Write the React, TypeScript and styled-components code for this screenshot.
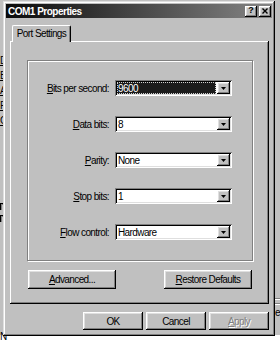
import React from "react";
import styled, { createGlobalStyle } from "styled-components";

const GlobalStyle = createGlobalStyle`
  html, body { margin: 0; padding: 0; background: #c0c0c0; }
  body { font-family: "Liberation Sans", Arial, sans-serif; }
`;

const raised = `
  box-shadow: inset -1px -1px #000, inset 1px 1px #fff, inset -2px -2px #808080, inset 2px 2px #dfdfdf;
`;

const Desktop = styled.div`
  position: relative;
  width: 280px;
  height: 342px;
  overflow: hidden;
  background: #c0c0c0;
  font-family: "Liberation Sans", Arial, sans-serif;
  font-size: 10px;
  letter-spacing: -0.6px;
  color: #000;
`;

const BackLabels = styled.div`
  position: absolute;
  left: 0;
  top: 56px;
  display: flex;
  flex-direction: column;
  gap: 5px;
  line-height: 10px;
`;

const BackLabel = styled.span<{ $gap?: number }>`
  display: block;
  margin-top: ${(p) => p.$gap ?? 0}px;
  text-decoration: underline;
  text-underline-offset: 1px;
`;

const BackBox = styled.span`
  display: block;
  width: 9px;
  height: 6px;
  border-left: 1px solid #000;
  border-top: 1px solid #000;
  box-shadow: inset 1px 1px #808080;
`;

const BottomStrip = styled.div`
  position: absolute;
  left: 0;
  right: 0;
  bottom: 0;
  height: 7px;
  background: #fff;
  display: flex;
  align-items: flex-end;
  gap: 8px;
  padding-left: 0;
  line-height: 10px;
`;

const RightStrip = styled.div`
  position: absolute;
  right: 0;
  top: 298px;
  width: 5px;
  display: flex;
  flex-direction: column;
  gap: 4px;
  line-height: 10px;
`;

const RightLine = styled.span`
  display: block;
  height: 1px;
  background: #808080;
  box-shadow: 0 1px #fff;
`;

const Dialog = styled.div`
  position: absolute;
  left: 3px;
  top: 1px;
  width: 272px;
  height: 335px;
  box-sizing: border-box;
  padding: 3px;
  background: #c0c0c0;
  box-shadow: inset -1px -1px #000, inset 1px 1px #dfdfdf, inset -2px -2px #808080, inset 2px 2px #fff;
  display: flex;
  flex-direction: column;
`;

const TitleBar = styled.div`
  height: 14px;
  flex: none;
  display: flex;
  align-items: center;
  justify-content: space-between;
  padding: 0 1px 0 2px;
  background: linear-gradient(to right, #0a0a0a, #858585);
`;

const Title = styled.span`
  color: #fff;
  font-weight: bold;
  font-size: 10px;
  letter-spacing: -0.5px;
`;

const TitleButtons = styled.div`
  display: flex;
  gap: 2px;
`;

const TitleButton = styled.div`
  width: 12px;
  height: 11px;
  box-sizing: border-box;
  background: #c0c0c0;
  ${raised}
  display: flex;
  align-items: center;
  justify-content: center;
  font-weight: bold;
  font-size: 9px;
  letter-spacing: 0;
  line-height: 9px;
  padding-bottom: 1px;
`;

const TabStrip = styled.div`
  margin-top: 7px;
  height: 16px;
  display: flex;
  padding-left: 6px;
  position: relative;
  z-index: 1;
`;

const Tab = styled.div`
  width: 59px;
  height: 17px;
  box-sizing: border-box;
  background: #c0c0c0;
  border-top: 1px solid #fff;
  border-left: 1px solid #fff;
  border-right: 1px solid #000;
  border-radius: 2px 2px 0 0;
  box-shadow: inset -1px 0 #808080;
  display: flex;
  align-items: center;
  justify-content: center;
  padding-bottom: 1px;
`;

const Panel = styled.div`
  margin: 0 3px 0 4px;
  height: 263px;
  box-sizing: border-box;
  padding: 19px 16px 0 17px;
  background: #c0c0c0;
  box-shadow: inset -1px -1px #000, inset 1px 1px #fff, inset -2px -2px #808080;
  display: flex;
  flex-direction: column;
`;

const GroupBox = styled.div`
  height: 201px;
  box-sizing: border-box;
  border: 1px solid #808080;
  box-shadow: inset 1px 1px #fff, 1px 1px #fff;
  display: grid;
  grid-template-columns: 81px 117px;
  grid-auto-rows: 16px;
  column-gap: 6px;
  row-gap: 20px;
  align-content: start;
  padding-top: 19px;
`;

const FieldLabel = styled.label`
  justify-self: end;
  align-self: center;
  white-space: nowrap;
`;

const Key = styled.span`
  text-decoration: underline;
  text-underline-offset: 1px;
`;

const Select = styled.div`
  height: 16px;
  box-sizing: border-box;
  padding: 2px;
  background: #fff;
  box-shadow: inset 1px 1px #808080, inset -1px -1px #fff, inset 2px 2px #000, inset -2px -2px #dfdfdf;
  display: flex;
`;

const SelectValue = styled.div<{ $focused?: boolean }>`
  flex: 1;
  display: flex;
  align-items: center;
  box-sizing: border-box;
  margin: ${(p) => (p.$focused ? "0 1px 0 0" : "0")};
  padding-left: ${(p) => (p.$focused ? "0" : "1px")};
  background: ${(p) => (p.$focused ? "#1c1c1c" : "transparent")};
  color: ${(p) => (p.$focused ? "#fff" : "#000")};
  border: ${(p) => (p.$focused ? "1px dotted #d0d0d0" : "none")};
`;

const DropButton = styled.div`
  width: 13px;
  flex: none;
  background: #c0c0c0;
  ${raised}
  display: flex;
  align-items: center;
  justify-content: center;
`;

const PanelButtons = styled.div`
  margin-top: 9px;
  padding: 0 1px;
  display: flex;
  justify-content: space-between;
`;

const Button = styled.button<{ $w: number; $h: number; $disabled?: boolean }>`
  width: ${(p) => p.$w}px;
  height: ${(p) => p.$h}px;
  box-sizing: border-box;
  border: none;
  padding: 0;
  margin: 0;
  background: #c0c0c0;
  ${raised}
  font-family: "Liberation Sans", Arial, sans-serif;
  font-size: 10px;
  letter-spacing: -0.6px;
  color: ${(p) => (p.$disabled ? "#808080" : "#000")};
  text-shadow: ${(p) => (p.$disabled ? "1px 1px #fff" : "none")};
  display: flex;
  align-items: center;
  justify-content: center;
`;

const Footer = styled.div`
  margin-top: 8px;
  padding-right: 3px;
  display: flex;
  justify-content: flex-end;
  gap: 3px;
`;

const Arrow = () => (
  <svg width="5" height="3" viewBox="0 0 5 3">
    <polygon points="0,0 5,0 2.5,3" fill="#000" />
  </svg>
);

const CloseIcon = () => (
  <svg width="6" height="6" viewBox="0 0 6 6">
    <path d="M0.5 0.5 L5.5 5.5 M5.5 0.5 L0.5 5.5" stroke="#000" strokeWidth="1.4" />
  </svg>
);

type Field = { key: string; rest: string; value: string; focused?: boolean };

const fields: Field[] = [
  { key: "B", rest: "its per second:", value: "9600", focused: true },
  { key: "D", rest: "ata bits:", value: "8" },
  { key: "P", rest: "arity:", value: "None" },
  { key: "S", rest: "top bits:", value: "1" },
  { key: "F", rest: "low control:", value: "Hardware" },
];

export default function App() {
  return (
    <>
      <GlobalStyle />
      <Desktop>
        <BackLabels>
          <BackLabel>D</BackLabel>
          <BackLabel>B</BackLabel>
          <BackLabel>A</BackLabel>
          <BackLabel>F</BackLabel>
          <BackLabel>C</BackLabel>
          <BackLabel $gap={72}>
            <BackBox />
          </BackLabel>
          <BackBox />
        </BackLabels>
        <RightStrip>
          <RightLine />
          <RightLine />
          <span>e</span>
        </RightStrip>
        <BottomStrip>
          <span>N</span>
        </BottomStrip>
        <Dialog>
          <TitleBar>
            <Title>COM1 Properties</Title>
            <TitleButtons>
              <TitleButton>?</TitleButton>
              <TitleButton>
                <CloseIcon />
              </TitleButton>
            </TitleButtons>
          </TitleBar>
          <TabStrip>
            <Tab>Port Settings</Tab>
          </TabStrip>
          <Panel>
            <GroupBox>
              {fields.map((f) => (
                <React.Fragment key={f.key}>
                  <FieldLabel>
                    <Key>{f.key}</Key>
                    {f.rest}
                  </FieldLabel>
                  <Select>
                    <SelectValue $focused={f.focused}>{f.value}</SelectValue>
                    <DropButton>
                      <Arrow />
                    </DropButton>
                  </Select>
                </React.Fragment>
              ))}
            </GroupBox>
            <PanelButtons>
              <Button $w={88} $h={19}>
                <Key>A</Key>dvanced...
              </Button>
              <Button $w={88} $h={19}>
                <Key>R</Key>estore Defaults
              </Button>
            </PanelButtons>
          </Panel>
          <Footer>
            <Button $w={60} $h={18}>OK</Button>
            <Button $w={60} $h={18}>Cancel</Button>
            <Button $w={60} $h={18} $disabled>
              <Key>A</Key>pply
            </Button>
          </Footer>
        </Dialog>
      </Desktop>
    </>
  );
}
